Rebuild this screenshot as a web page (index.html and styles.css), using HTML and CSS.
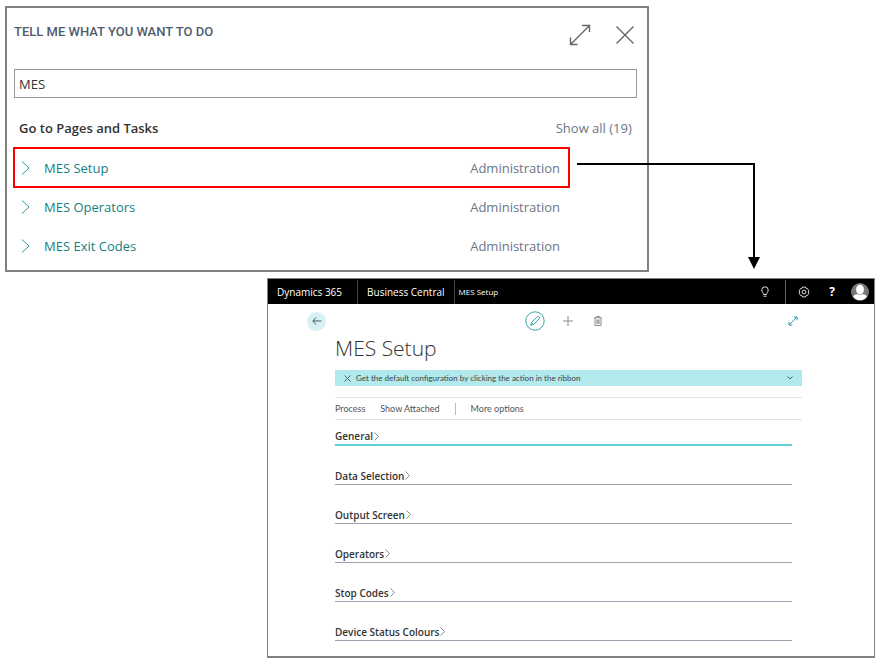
FILE: index.html
```html
<!DOCTYPE html>
<html lang="en">
<head>
<meta charset="utf-8">
<title>MES Setup</title>
<link rel="stylesheet" href="styles.css">
</head>
<body>
<main class="walkthrough">
  <section class="search-panel">
    <header class="search-head">
      <h2 class="search-title">TELL ME WHAT YOU WANT TO DO</h2>
      <div class="search-tools">
        <button class="icon-button" type="button" aria-label="Expand">
          <svg width="22" height="22" viewBox="0 0 22 22" class="line-icon"><path d="M1.5 20.5L20.5 1.5M13 1.5H20.5V8M1.5 13.5V20.5H8.5"/></svg>
        </button>
        <button class="icon-button" type="button" aria-label="Close">
          <svg width="20" height="20" viewBox="0 0 20 20" class="line-icon"><path d="M1.5 1.5L18.5 18.5M18.5 1.5L1.5 18.5"/></svg>
        </button>
      </div>
    </header>
    <input class="search-box" type="text" value="MES" aria-label="Tell me what you want to do">
    <div class="group-head">
      <h3 class="group-title">Go to Pages and Tasks</h3>
      <a class="show-all" href="#all">Show all (19)</a>
    </div>
    <ul class="results">
      <li class="result result-marked">
        <svg class="result-arrow" width="9" height="14" viewBox="0 0 9 14"><path d="M1 .5L8 7L1 13.5"/></svg>
        <a class="result-link" href="#setup">MES Setup</a><span class="result-area">Administration</span>
      </li>
      <li class="result">
        <svg class="result-arrow" width="9" height="14" viewBox="0 0 9 14"><path d="M1 .5L8 7L1 13.5"/></svg>
        <a class="result-link" href="#operators">MES Operators</a><span class="result-area">Administration</span>
      </li>
      <li class="result">
        <svg class="result-arrow" width="9" height="14" viewBox="0 0 9 14"><path d="M1 .5L8 7L1 13.5"/></svg>
        <a class="result-link" href="#exit-codes">MES Exit Codes</a><span class="result-area">Administration</span>
      </li>
    </ul>
  </section>

  <section class="app" id="setup">
    <nav class="topbar">
      <a class="brand" href="#home">Dynamics 365</a>
      <a class="brand brand-product" href="#central">Business Central</a>
      <a class="crumb" href="#setup">MES Setup</a>
      <div class="topbar-tools">
        <button class="top-button top-search" type="button" aria-label="Search">
          <svg width="10" height="12" viewBox="0 0 10 12" class="top-icon"><path d="M3.5 8.5C3.5 7 1.8 6.2 1.8 4A3.2 3.2 0 0 1 8.2 4C8.2 6.2 6.5 7 6.5 8.5ZM3.5 10.2H6.5"/></svg>
        </button>
        <button class="top-button" type="button" aria-label="Settings">
          <svg width="12" height="12" viewBox="0 0 12 12" class="top-icon"><circle cx="6" cy="6" r="1.9"/><path d="M4.6 1.1H7.4L8 2.3L9.3 2.4L10.8 4.7L10.2 6L10.8 7.3L9.3 9.6L8 9.7L7.4 10.9H4.6L4 9.7L2.7 9.6L1.2 7.3L1.8 6L1.2 4.7L2.7 2.4L4 2.3Z"/></svg>
        </button>
        <button class="top-button help" type="button" aria-label="Help">?</button>
        <button class="top-button" type="button" aria-label="Account">
          <svg width="18" height="18" viewBox="0 0 18 18"><circle cx="9" cy="9" r="9" fill="#777"/><path d="M2 13.5C4 11 6 11.3 9 11.3S14 11 16 13.5A8.6 8.6 0 0 1 2 13.5Z" fill="#fff"/><ellipse cx="9" cy="6.6" rx="4.2" ry="5" fill="#fff" stroke="#777" stroke-width=".5"/></svg>
        </button>
      </div>
    </nav>

    <div class="page-tools">
      <button class="back" type="button" aria-label="Back">
        <svg width="10" height="8" viewBox="0 0 10 8"><path d="M4 .5L.8 4L4 7.5M1 4H9.5"/></svg>
      </button>
      <div class="page-actions">
        <button class="edit" type="button" aria-label="Edit">
          <svg width="20" height="20" viewBox="0 0 20 20"><circle cx="10" cy="10" r="9.2"/><path d="M5.8 14.2L6.5 11.4L12.2 5.7Q13.4 5 14.3 6T14.2 7.9L8.6 13.5ZM6.5 11.4L8.6 13.5"/></svg>
        </button>
        <button class="tool" type="button" aria-label="New">
          <svg width="10" height="10" viewBox="0 0 10 10"><path d="M5 0V10M0 5H10"/></svg>
        </button>
        <button class="tool" type="button" aria-label="Delete">
          <svg width="8" height="10" viewBox="0 0 8 10"><path d="M0 1.8H8M2.6 1.5V.5H5.4V1.5M1 2V9.5H7V2M3 3.5V8M4 3.5V8M5 3.5V8"/></svg>
        </button>
      </div>
      <button class="widen" type="button" aria-label="Widen page">
        <svg width="10" height="10" viewBox="0 0 10 10"><path d="M1 9L9 1M5.8 1H9V4.2M1 5.8V9H4.2"/></svg>
      </button>
    </div>

    <div class="page">
      <h1 class="page-title">MES Setup</h1>
      <div class="notice">
        <button class="notice-button" type="button" aria-label="Dismiss"><svg width="7" height="7" viewBox="0 0 7 7"><path d="M.5 .5L6.5 6.5M6.5 .5L.5 6.5"/></svg></button>
        <span class="notice-text">Get the default configuration by clicking the action in the ribbon</span>
        <button class="notice-button notice-more" type="button" aria-label="More"><svg width="6" height="4" viewBox="0 0 6 4"><path d="M.5 .5L3 3L5.5 .5"/></svg></button>
      </div>
      <div class="ribbon">
        <button class="ribbon-item" type="button">Process</button>
        <button class="ribbon-item" type="button">Show Attached</button>
        <button class="ribbon-item ribbon-more" type="button">More options</button>
      </div>
      <div class="tabs">
        <button class="tab tab-active" type="button">General<svg width="5" height="9" viewBox="0 0 5 9"><path d="M.5 .5L4.5 4.5L.5 8.5"/></svg></button>
        <button class="tab" type="button">Data Selection<svg width="5" height="9" viewBox="0 0 5 9"><path d="M.5 .5L4.5 4.5L.5 8.5"/></svg></button>
        <button class="tab" type="button">Output Screen<svg width="5" height="9" viewBox="0 0 5 9"><path d="M.5 .5L4.5 4.5L.5 8.5"/></svg></button>
        <button class="tab" type="button">Operators<svg width="5" height="9" viewBox="0 0 5 9"><path d="M.5 .5L4.5 4.5L.5 8.5"/></svg></button>
        <button class="tab" type="button">Stop Codes<svg width="5" height="9" viewBox="0 0 5 9"><path d="M.5 .5L4.5 4.5L.5 8.5"/></svg></button>
        <button class="tab" type="button">Device Status Colours<svg width="5" height="9" viewBox="0 0 5 9"><path d="M.5 .5L4.5 4.5L.5 8.5"/></svg></button>
      </div>
    </div>
  </section>

  <div class="connector">
    <svg class="connector-head" width="12" height="12" viewBox="0 0 12 12"><path d="M0 0H12L6 12Z"/></svg>
  </div>
</main>
</body>
</html>
```
FILE: styles.css
```css
* { box-sizing: border-box; }

body {
  margin: 0;
  background: #fff;
  color: #333;
  font-family: "Open Sans", "Noto Sans", sans-serif;
}

h1, h2, h3, ul { margin: 0; padding: 0; font-weight: 400; }

button {
  display: flex;
  align-items: center;
  justify-content: center;
  padding: 0;
  border: 0;
  background: none;
  color: inherit;
  font: inherit;
}

a { color: inherit; text-decoration: none; }

svg { display: block; flex: none; fill: none; }

.walkthrough {
  position: relative;
  padding: 6px 8px 7px 5px;
}

/* Search panel */
.search-panel {
  width: 74%;
  padding: 14px 10px 5px 7px;
  border: 2px solid #7f7f7f;
}

.search-head {
  display: flex;
  align-items: flex-start;
  justify-content: space-between;
  height: 47px;
}

.search-title {
  color: #505c6d;
  font: 500 13px/20px Roboto, sans-serif;
}

.search-tools { display: flex; gap: 24px; padding: 2px; }

.icon-button { height: 22px; }

.line-icon { stroke: #666; stroke-width: 1.4; }

.search-box {
  display: block;
  width: 100%;
  height: 29px;
  padding: 0 4px;
  border: 1px solid #999;
  background: #fff;
  color: #333;
  font: 13px/20px "Open Sans", sans-serif;
}

.group-head {
  display: flex;
  justify-content: space-between;
  padding: 20px 5px 9px;
  font-size: 13px;
  line-height: 20px;
}

.group-title { font-size: 13px; font-weight: 600; }

.show-all { color: #6a7585; }

.results { width: 557px; max-width: 100%; margin-left: -1px; list-style: none; }

.result {
  display: flex;
  align-items: center;
  height: 39px;
  padding: 0 8px 0 6px;
  border: 2px solid transparent;
  font-size: 13px;
}

.result-marked { height: 41px; margin-bottom: -1px; border-color: #f00; }

.result-arrow { stroke: #2a9a9a; }

.result-link { margin-left: 14px; color: #158080; }

.result-area { margin-left: auto; color: #6a7585; }

/* Application window */
.app {
  margin: 6px 0 0 262px;
  border: 1px solid #7f7f7f;
  border-bottom-width: 2px;
}

.topbar {
  display: flex;
  align-items: center;
  height: 25px;
  padding-left: 9px;
  background: #000;
  color: #fff;
  font-size: 10px;
  line-height: 24px;
}

.brand { padding-right: 15px; border-right: 1px solid #444; }

.brand-product { padding: 0 9px; }

.crumb { margin-left: 4px; font-size: 8px; }

.topbar-tools { display: flex; align-items: center; margin-left: auto; }

.top-button { width: 28px; height: 24px; }

.top-search { width: 41px; margin-right: 4px; border-right: 1px solid #666; }

.top-icon { stroke: #ddd; }

.help { font-size: 12px; font-weight: 700; }

.page-tools {
  display: flex;
  align-items: center;
  justify-content: space-between;
  height: 34px;
  padding: 0 76px 0 39px;
}

.back {
  width: 19px;
  height: 19px;
  border-radius: 50%;
  background: #d6f0f3;
}

.back svg { stroke: #555; }

.page-actions { display: flex; align-items: center; gap: 15px; padding-left: 16px; }

.edit svg { stroke: #39a3aa; }

.tool { width: 15px; }

.tool svg { stroke: #888; }

.widen svg { stroke: #2a9aa2; }

.page { padding: 0 72px 15px 67px; }

.page-title {
  padding-bottom: 12px;
  font-size: 21px;
  font-weight: 300;
  line-height: 20px;
}

.notice {
  display: flex;
  align-items: center;
  height: 16px;
  padding: 0 9px;
  background: #b1e9ec;
  color: #444;
  font: 8px/16px Lato, sans-serif;
}

.notice-button svg { stroke: #567; }

.notice-text { margin-left: 5px; }

.notice-more { margin-left: auto; }

.ribbon {
  display: flex;
  align-items: center;
  height: 23px;
  margin-top: 11px;
  border: solid #e3e3e3;
  border-width: 1px 0;
  color: #555;
  font: 9px/12px Lato, sans-serif;
}

.ribbon-item { margin-right: 15px; }

.ribbon-more { padding-left: 15px; border-left: 1px solid #bbb; }

.tabs { padding-right: 10px; }

.tab {
  justify-content: flex-start;
  width: 100%;
  height: 18px;
  margin-top: 21px;
  border-bottom: 1px solid #9aa3af;
  font-size: 10px;
  font-weight: 600;
}

.tab svg { margin-left: 1px; stroke: #888; }

.tab-active { margin-top: 8px; border-bottom: 2px solid #5fd0d6; }

/* Arrow from the marked result to the window */
.connector {
  position: absolute;
  top: 163px;
  left: 577px;
  width: 178px;
  height: 95px;
  border: solid #000;
  border-width: 2px 2px 0 0;
}

.connector-head {
  position: absolute;
  right: -7px;
  bottom: -11px;
  fill: #000;
}
```
